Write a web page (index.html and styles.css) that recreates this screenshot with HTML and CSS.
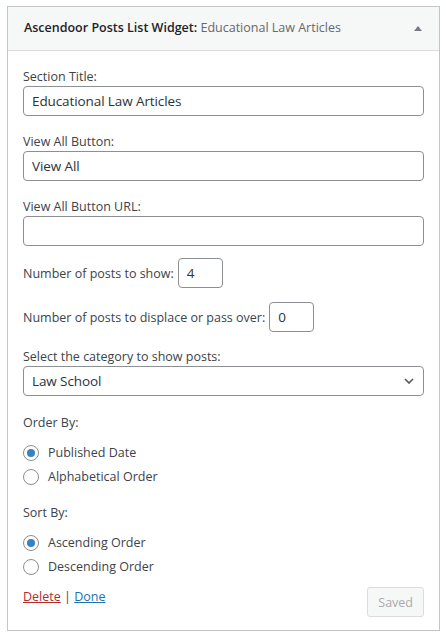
FILE: index.html
```html
<!DOCTYPE html>
<html lang="en">
  <head>
    <meta charset="UTF-8" />
    <meta name="viewport" content="width=device-width, initial-scale=1.0" />
    <title>Ascendoor Posts List Widget</title>

    <link rel="stylesheet" href="styles.css">
  </head>
  <body>
    <div class="widget">
      <div class="widget-top">
        <h3 class="widget-title">Ascendoor Posts List Widget: <span class="in-title">Educational Law Articles</span></h3>
        <span class="toggle-arrow"></span>
      </div>

      <form class="widget-inside">
        <p class="field">
          <label for="title">Section Title:</label>
          <input class="widefat" id="title" type="text" value="Educational Law Articles" />
        </p>
        <p class="field">
          <label for="button-label">View All Button:</label>
          <input class="widefat" id="button-label" type="text" value="View All" />
        </p>
        <p class="field">
          <label for="button-url">View All Button URL:</label>
          <input class="widefat" id="button-url" type="text" value="" />
        </p>

        <p class="inline-field first">
          <label for="post-count">Number of posts to show:</label>
          <input class="tiny-text" id="post-count" type="text" value="4" />
        </p>
        <p class="inline-field">
          <label for="post-offset">Number of posts to displace or pass over:</label>
          <input class="tiny-text" id="post-offset" type="text" value="0" />
        </p>

        <p class="field select-field">
          <label for="category">Select the category to show posts:</label>
          <span class="select-wrap">
            <select class="widefat" id="category">
              <option selected>Law School</option>
              <option>Criminal Law</option>
              <option>Family Law</option>
            </select>
            <svg class="chevron" width="10" height="6" viewBox="0 0 10 6">
              <path d="M1 1l4 4 4-4" fill="none" stroke="#50575e" stroke-width="1.6" />
            </svg>
          </span>
        </p>

        <div class="radio-group">
          <p class="group-label">Order By:</p>
          <label class="radio"><input type="radio" name="orderby" checked /> Published Date</label>
          <label class="radio"><input type="radio" name="orderby" /> Alphabetical Order</label>
        </div>

        <div class="radio-group">
          <p class="group-label">Sort By:</p>
          <label class="radio"><input type="radio" name="order" checked /> Ascending Order</label>
          <label class="radio"><input type="radio" name="order" /> Descending Order</label>
        </div>

        <div class="widget-control-actions">
          <div class="links">
            <a href="#" class="delete">Delete</a> | <a href="#" class="done">Done</a>
          </div>
          <button type="button" class="button" disabled>Saved</button>
        </div>
      </form>
    </div>
  </body>
</html>
```

FILE: styles.css
```css
* {
  box-sizing: border-box;
}

body {
  margin: 0;
  background: #fff;
  color: #3c434a;
  font-family: "Open Sans", "Noto Sans", sans-serif;
  font-size: 12.5px;
  line-height: 18px;
}

.widget {
  margin: 6px 6px 0 7px;
  border: 1px solid #c3c4c7;
  background: #fff;
}

/* Header */
.widget-top {
  display: flex;
  align-items: center;
  justify-content: space-between;
  height: 44px;
  padding: 0 17px 1px 16px;
  background: #f6f7f7;
  border-bottom: 1px solid #dcdcde;
}

.widget-title {
  margin: 0;
  font-size: 12.5px;
  font-weight: 600;
  color: #1d2327;
}

.in-title {
  font-weight: 400;
  color: #646970;
}

.toggle-arrow {
  width: 0;
  height: 0;
  border-left: 4px solid transparent;
  border-right: 4px solid transparent;
  border-bottom: 5px solid #787c82;
}

/* Form */
.widget-inside {
  padding: 17px 15px 13px;
}

.widget-inside p {
  margin: 0;
}

.field {
  margin-bottom: 17px !important;
}

.field label {
  display: block;
}

input[type='text'],
select {
  height: 30px;
  padding: 0 8px;
  border: 1px solid #8c8f94;
  border-radius: 4px;
  background: #fff;
  color: #2c3338;
  font-family: inherit;
  font-size: 13.5px;
  letter-spacing: -0.1px;
  outline: none;
}

.widefat {
  display: block;
  width: 100%;
}

.inline-field {
  display: flex;
  align-items: center;
  gap: 4px;
}

.inline-field.first {
  margin-top: -5px !important;
}
.inline-field + .inline-field {
  margin-top: 14px !important;
}
.inline-field label {
  padding-top: 2px;
}

.tiny-text {
  width: 45px;
}

.select-field {
  margin-top: 16px !important;
}

.select-wrap {
  position: relative;
  display: block;
}

select {
  appearance: none;
  -webkit-appearance: none;
  padding-right: 24px;
}

.chevron {
  position: absolute;
  right: 10px;
  top: 12px;
  pointer-events: none;
}

/* Radios */
.radio-group {
  margin-top: 18px;
}

.group-label {
  margin-bottom: 9px !important;
}

.radio {
  display: flex;
  align-items: center;
  gap: 9px;
  height: 24px;
}

input[type='radio'] {
  appearance: none;
  -webkit-appearance: none;
  display: grid;
  place-items: center;
  width: 16px;
  height: 16px;
  margin: 0;
  border: 1px solid #8c8f94;
  border-radius: 50%;
  background: #fff;
}

input[type='radio']:checked::before {
  content: '';
  width: 8px;
  height: 8px;
  border-radius: 50%;
  background: #3582c4;
}

.radio-group + .radio-group {
  margin-top: 15px;
}

/* Footer */
.widget-control-actions {
  display: flex;
  justify-content: space-between;
  align-items: flex-start;
  margin-top: 8px;
}

.links {
  line-height: 20px;
  color: #3c434a;
}

.links a {
  text-decoration: underline;
}
.links .delete {
  color: #b32d2e;
}
.links .done {
  color: #2271b1;
}

.button {
  height: 30px;
  padding: 0 10px;
  border: 1px solid #dcdcde;
  border-radius: 3px;
  background: #f6f7f7;
  color: #a7aaad;
  font-family: inherit;
  font-size: 12.5px;
}
```
